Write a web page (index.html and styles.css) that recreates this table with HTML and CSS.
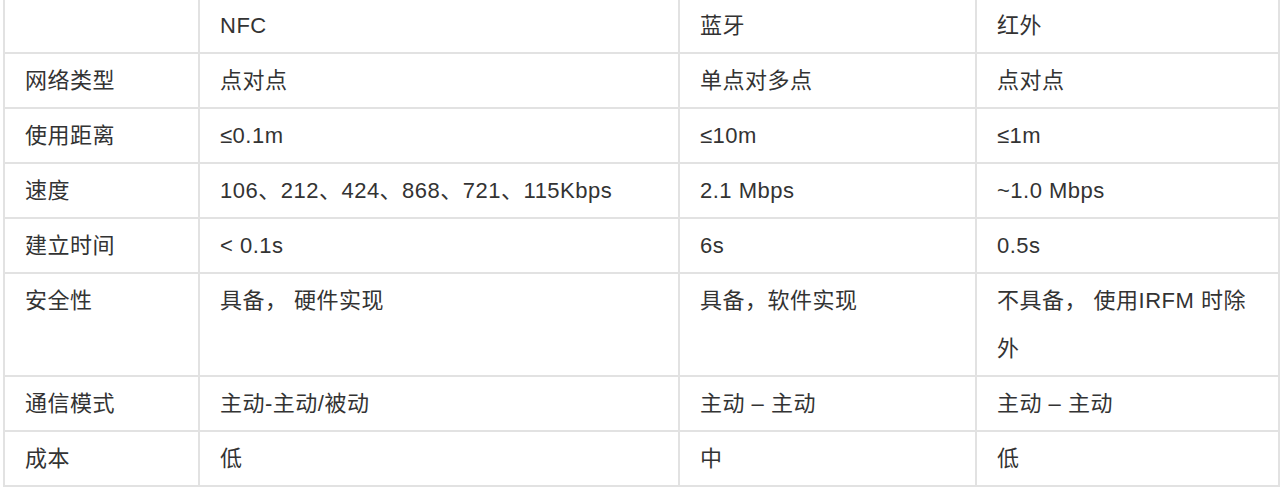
FILE: index.html
```html
<!DOCTYPE html>
<html lang="zh">
<head>
<meta charset="utf-8">
<link rel="stylesheet" href="styles.css">
</head>
<body>
<table class="cmp">
  <colgroup>
    <col class="c1"><col class="c2"><col class="c3"><col class="c4">
  </colgroup>
  <tr><td></td><td>NFC</td><td>蓝牙</td><td>红外</td></tr>
  <tr><td>网络类型</td><td>点对点</td><td>单点对多点</td><td>点对点</td></tr>
  <tr><td>使用距离</td><td>≤0.1m</td><td>≤10m</td><td>≤1m</td></tr>
  <tr><td>速度</td><td>106、212、424、868、721、115Kbps</td><td>2.1 Mbps</td><td>~1.0 Mbps</td></tr>
  <tr><td>建立时间</td><td>&lt; 0.1s</td><td>6s</td><td>0.5s</td></tr>
  <tr><td>安全性</td><td>具备， 硬件实现</td><td>具备，软件实现</td><td>不具备， 使用IRFM 时除外</td></tr>
  <tr><td>通信模式</td><td>主动-主动/被动</td><td>主动 – 主动</td><td>主动 – 主动</td></tr>
  <tr><td>成本</td><td>低</td><td>中</td><td>低</td></tr>
</table>
</body>
</html>
```

FILE: styles.css
```css
html, body {
  margin: 0;
  padding: 0;
  background: #ffffff;
}
body {
  padding-left: 3px;
  font-family: "Liberation Sans", "Noto Sans CJK SC", sans-serif;
  font-size: 22px;
  letter-spacing: 0.5px;
  color: #333333;
}
.cmp {
  border-collapse: collapse;
  table-layout: fixed;
  width: 1275px;
  margin-top: -3px;
}
.c1 { width: 195px; }
.c2 { width: 480px; }
.c3 { width: 297px; }
.c4 { width: 303px; }
.cmp td {
  border: 2px solid #e2e2e2;
  padding: 3px 20px 2px 20px;
  line-height: 48px;
  height: 48px;
  vertical-align: top;
  word-break: break-all;
}
```
